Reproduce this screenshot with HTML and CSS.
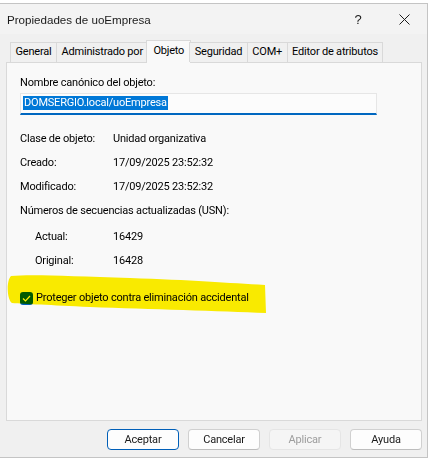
FILE: index.html
```html
<!DOCTYPE html>
<html lang="es">
<head>
<meta charset="utf-8">
<title>Propiedades de uoEmpresa</title>
<link rel="stylesheet" href="styles.css">
</head>
<body>
<div class="window">
  <div class="titlebar">
    <span class="title">Propiedades de uoEmpresa</span>
    <span class="tb-btn help">?</span>
    <span class="tb-btn close">
      <svg width="11" height="11" viewBox="0 0 11 11"><path d="M0.5 0.5 L10.5 10.5 M10.5 0.5 L0.5 10.5" stroke="#1b1b1b" stroke-width="1" fill="none"/></svg>
    </span>
  </div>
  <div class="client">
    <div class="tabs">
      <div class="tab">General</div>
      <div class="tab">Administrado por</div>
      <div class="tab active">Objeto</div>
      <div class="tab">Seguridad</div>
      <div class="tab">COM+</div>
      <div class="tab">Editor de atributos</div>
    </div>
    <div class="panel">
      <div class="label">Nombre canónico del objeto:</div>
      <div class="input"><span class="sel">DOMSERGIO.local/uoEmpresa</span></div>
      <div class="props">
        <div class="row"><span class="key">Clase de objeto:</span><span class="val">Unidad organizativa</span></div>
        <div class="row"><span class="key">Creado:</span><span class="val">17/09/2025 23:52:32</span></div>
        <div class="row"><span class="key">Modificado:</span><span class="val">17/09/2025 23:52:32</span></div>
        <div class="row"><span>Números de secuencias actualizadas (USN):</span></div>
        <div class="row sub first"><span class="key">Actual:</span><span class="val">16429</span></div>
        <div class="row sub"><span class="key">Original:</span><span class="val">16428</span></div>
      </div>
      <div class="check-row">
        <span class="checkbox">
          <svg width="9" height="7" viewBox="0 0 9 7"><path d="M1 3.5 L3.5 6 L8 1" stroke="#fff" stroke-width="1.2" fill="none"/></svg>
        </span>
        <span>Proteger objeto contra eliminación accidental</span>
      </div>
    </div>
    <div class="buttons">
      <button class="btn default">Aceptar</button>
      <button class="btn">Cancelar</button>
      <button class="btn disabled">Aplicar</button>
      <button class="btn">Ayuda</button>
    </div>
  </div>
</div>
<svg class="marker" width="431" height="460" viewBox="0 0 431 460">
  <path d="M11 276 C 30 274, 70 276, 130 278 C 190 280, 230 283, 265 285 L 266 313 C 220 311, 150 309, 90 307 C 50 305, 25 304, 12 303 C 7 300, 6 281, 11 276 Z" fill="#fff000"/>
</svg>
</body>
</html>
```
FILE: styles.css
```css
* { box-sizing: border-box; }
html, body { margin: 0; padding: 0; background: #ffffff; }
body {
  width: 431px;
  height: 460px;
  position: relative;
  font-family: Roboto, "Liberation Sans", Arial, sans-serif;
  font-size: 11px;
  letter-spacing: -0.2px;
  color: #000;
}
.window {
  margin-top: 3px;
  width: 428px;
  height: 455px;
  border: 1px solid #c4c4c4;
  border-left: none;
  background: #f0f0f0;
  display: flex;
  flex-direction: column;
}
.titlebar {
  height: 30px;
  background: #f3f3f3;
  display: flex;
  align-items: center;
  flex-shrink: 0;
}
.title {
  font-family: "Liberation Sans", Arial, sans-serif;
  font-size: 11.6px;
  letter-spacing: 0;
  padding-left: 7px;
  flex: 1;
  color: #1a1a1a;
}
.tb-btn {
  width: 46px;
  height: 30px;
  display: flex;
  align-items: center;
  justify-content: center;
  color: #1a1a1a;
}
.help { font-family: "Liberation Sans", Arial, sans-serif; font-size: 13px; }
.client {
  flex: 1;
  display: flex;
  flex-direction: column;
  padding: 6px 5px 0 6px;
}
.tabs {
  display: flex;
  align-items: flex-end;
  padding-left: 4px;
  height: 22px;
  position: relative;
  z-index: 1;
}
.tab {
  height: 20px;
  line-height: 18px;
  padding: 0 4.5px;
  border: 1px solid #d9d9d9;
  border-bottom: none;
  margin-left: -1px;
  background: #f0f0f0;
  white-space: nowrap;
  color: #000;
}
.tab:first-child { margin-left: 0; }
.tab.active {
  height: 23px;
  margin-bottom: -1px;
  line-height: 20px;
  background: #f9f9f9;
  padding: 0 6px;
  margin-left: -2px;
  margin-right: -1px;
}
.panel {
  height: 359px;
  width: 416px;
  border: 1px solid #d9d9d9;
  background: #f9f9f9;
  padding: 12px 13px 0 13px;
}
.label { line-height: 16px; }
.input {
  margin-top: 2px;
  width: 357px;
  height: 22px;
  border: 1px solid #e6e6e6;
  border-bottom: 2px solid #0067c0;
  background: #fcfcfc;
  padding: 2px 0 0 2px;
}
.sel {
  display: inline-block;
  background: #0078d7;
  color: #fff;
  line-height: 14px;
  height: 14px;
  padding: 0 1px;
}
.props {
  margin-top: 16px;
  display: flex;
  flex-direction: column;
  gap: 8px;
}
.row { display: flex; line-height: 16px; }
.key { width: 93px; flex-shrink: 0; }
.sub { padding-left: 15px; }
.sub .key { width: 78px; }
.sub.first { margin-top: 2px; }
.check-row {
  margin-top: 21px;
  display: flex;
  align-items: center;
  line-height: 16px;
  gap: 3px;
}
.checkbox {
  width: 13px;
  height: 13px;
  border-radius: 3px;
  background: #005fb8;
  display: flex;
  align-items: center;
  justify-content: center;
}
.buttons {
  display: flex;
  justify-content: flex-end;
  gap: 9px;
  margin-top: 8px;
}
.btn {
  width: 72px;
  height: 21px;
  border: 1px solid #d0d0d0;
  border-bottom-color: #bdbdbd;
  border-radius: 4px;
  background: #fdfdfd;
  font-family: inherit;
  font-size: 11px;
  letter-spacing: -0.2px;
  color: #1a1a1a;
  padding: 0;
}
.btn.default { border: 1px solid #005fb8; }
.btn.disabled {
  background: #f5f5f5;
  border-color: #e5e5e5;
  color: #9d9d9d;
}
.marker {
  position: absolute;
  left: 0;
  top: 0;
  mix-blend-mode: multiply;
  pointer-events: none;
}
```
